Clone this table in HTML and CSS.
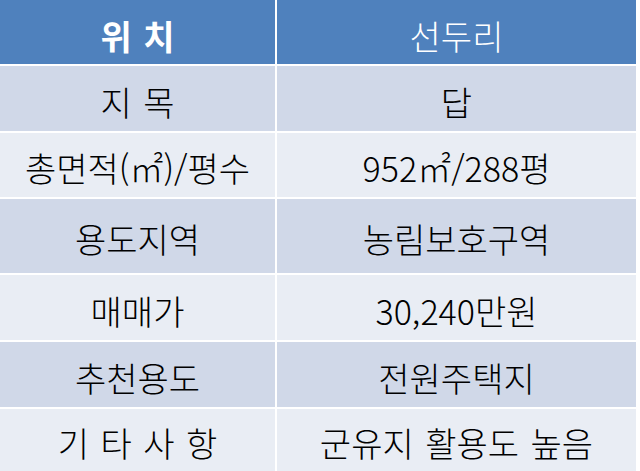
FILE: index.html
```html
<!DOCTYPE html>
<html lang="ko">
<head>
<meta charset="utf-8">
<title>토지 정보</title>
<link rel="stylesheet" href="styles.css">
</head>
<body>
<div class="table">
  <div class="cell head key">위 치</div>
  <div class="cell head">선두리</div>

  <div class="cell odd">지 목</div>
  <div class="cell odd">답</div>

  <div class="cell even">총면적(㎡)/평수</div>
  <div class="cell even">952㎡/288평</div>

  <div class="cell odd">용도지역</div>
  <div class="cell odd">농림보호구역</div>

  <div class="cell even">매매가</div>
  <div class="cell even">30,240만원</div>

  <div class="cell odd">추천용도</div>
  <div class="cell odd">전원주택지</div>

  <div class="cell even">기 타 사 항</div>
  <div class="cell even">군유지 활용도 높음</div>
</div>
</body>
</html>
```

FILE: styles.css
```css
html, body {
  margin: 0;
  padding: 0;
  background: #ffffff;
}

body {
  width: 640px;
  height: 471px;
  overflow: hidden;
  font-family: "Noto Sans CJK KR", "Noto Sans", sans-serif;
}

.table {
  display: grid;
  width: 636px;
  grid-template-columns: 275px 359px;
  grid-template-rows: 64px 65px 64px 74px 65px 65px 62px;
  gap: 2px;
  background: #ffffff;
}

.cell {
  display: flex;
  align-items: center;
  justify-content: center;
  font-size: 34px;
  font-weight: 300;
  line-height: 1;
  color: #000000;
  padding-top: 6px;
  box-sizing: border-box;
  white-space: nowrap;
  word-spacing: 2px;
}

.head {
  background: #4f81bd;
  color: #ffffff;
  padding-top: 8px;
}

.key {
  font-weight: bold;
}

.odd {
  background: #d0d8e8;
}

.even {
  background: #e9edf4;
}
```
